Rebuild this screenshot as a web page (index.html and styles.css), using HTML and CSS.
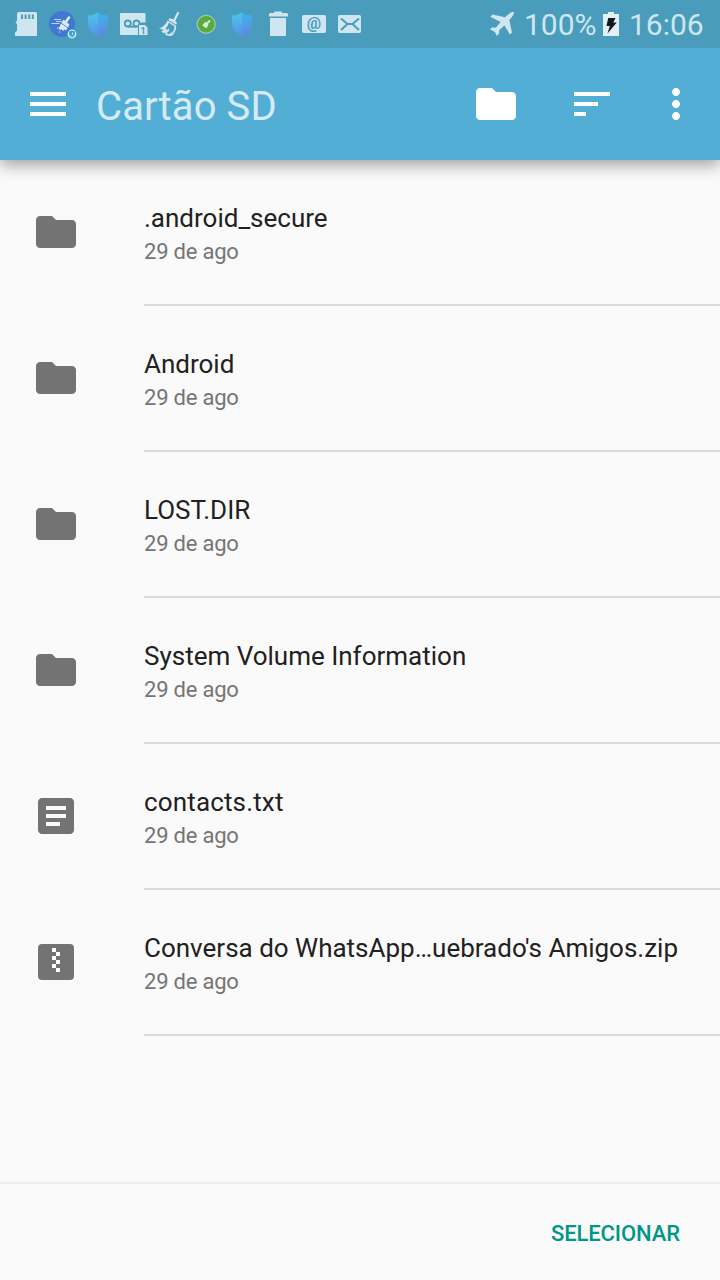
FILE: index.html
```html
<!DOCTYPE html>
<html lang="pt-BR">
<head>
<meta charset="utf-8">
<title>Cartão SD</title>
<link rel="stylesheet" href="styles.css">
</head>
<body>
<svg class="defs" aria-hidden="true">
  <defs>
    <linearGradient id="shield-fill" x1="0" y1="0" x2=".35" y2="1"><stop offset="0" stop-color="#32b6e5"/><stop offset=".5" stop-color="#45a9e7"/><stop offset="1" stop-color="#6189ed"/></linearGradient>
    <linearGradient id="shield-light" x1="0" y1="0" x2="0" y2="1"><stop offset="0" stop-color="#55d0e7"/><stop offset="1" stop-color="#5790ea"/></linearGradient>
    <symbol id="folder" viewBox="0 0 24 24"><path d="M10 4H4c-1.100 0-1.990.9-1.990 2L2 18c0 1.100.9 2 2 2h16c1.100 0 2-.9 2-2V8c0-1.100-.9-2-2-2h-8l-2-2z"/></symbol>
    <symbol id="shield" viewBox="0 0 36 48"><path fill="url(#shield-fill)" d="M18 12Q22 15.500 28 15.500V24Q28 31 18 36Q8 31 8 24V15.500Q14 15.500 18 12Z"/><path fill="url(#shield-light)" opacity=".65" d="M18 12Q14 15.500 8 15.500V24Q8 31 18 36Z"/></symbol>
  </defs>
</svg>
<div class="screen">
  <header class="status">
    <div class="notifications">
      <svg class="note" viewBox="8 0 36 48"><path fill="#cfe6ef" fill-rule="evenodd" d="M19 12h16.500q1.500 0 1.500 1.500V36H15v-3.500l2-2V24l-1.500-1 1.500-2.500V14q0-2 2-2ZM21 14.500v4.500h2v-4.500zM24.600 14.500v4.500h2v-4.500zM28.200 14.500v4.500h2v-4.500zM31.800 14.500v4.500h2v-4.500z"/></svg>
      <svg class="note" viewBox="44 0 36 48"><circle cx="62" cy="24" r="13" fill="#3f79d1"/><path d="M69 17.500l-2.500 3.500" stroke="#e6f0fa" stroke-width="2.600" stroke-linecap="round"/><path d="M63.500 19.500l6 5-1.500 3-6.500-4.500zM61 23.500l6.500 4.500-1.500 2.500-2-1-.5 1.500-2-1.500-2 .5-.5-2z" fill="#dceafa"/><path d="M54 19.500h7M51.500 23.500h8M56 21.500h6M57 28.500l2-1" stroke="#b9d5f3" stroke-width="1"/><circle cx="59.500" cy="32" r=".8" fill="#a9c8ee"/><circle cx="72" cy="34" r="4.400" fill="#e4f0f6"/><path d="M72 30.500l3 1v2.500q0 2-3 3.500-3-1.500-3-3.500v-2.500z" fill="#29a4dd"/><path d="M72.500 32.500v2l-1 1" stroke="#e8f5fb" stroke-width=".9" fill="none"/></svg>
      <svg class="note"><use href="#shield"/></svg>
      <svg class="note" viewBox="116 0 36 48"><path fill="#cfe6ef" d="M121 13h23.500q1 0 1 1v8.500H139V35h-18q-1 0-1-1V14q0-1 1-1Z"/><g fill="none" stroke="#4a9cbd" stroke-width="1.800"><circle cx="127.800" cy="23.500" r="3"/><circle cx="136.500" cy="23.500" r="3"/><path d="M128 26.700h8.500"/></g><path fill="#cfe6ef" stroke="#4a9cbd" stroke-width="1" d="M138.500 24.500h6.500l3 3V35.500h-9.500z"/><text class="sim" x="140.600" y="33.800">1</text></svg>
      <svg class="note" viewBox="152 0 36 48"><path d="M178 13l-3.700 7.200" stroke="#cfe6ef" stroke-width="2.200" stroke-linecap="round"/><path d="M169 18.500q2-.5 4.800 1.200t3.200 3.800l-1.200 1-7.500-4.500z" fill="#cfe6ef"/><path fill="#cfe6ef" fill-rule="evenodd" d="M167.500 20.500l8.800 5.200q-.2 6-4.300 10-4.500.8-7.500-1.700l1.800-1.300-3.200.2-2-2 3-.9-5-1.600Q165 26.500 167.500 20.500ZM168.700 22.700q-1 4-3.200 6.300l1.800.7 2-1.500-.6 3.300-2.400 1.700 3.300 1 2.400-3-.4 3q3-3.800 2.900-8z"/></svg>
      <svg class="note" viewBox="188 0 36 48"><circle cx="206.200" cy="24.300" r="9" fill="#58ac3e" stroke="#a5c9ac" stroke-width="1.200"/><path d="M209.500 21l-2.500 2.500" stroke="#d9ecd4" stroke-width="1.800" stroke-linecap="round"/><path d="M205.500 21.800l3 3-2.300 3.700-4-3.200z" fill="#d9ecd4"/></svg>
      <svg class="note"><use href="#shield"/></svg>
      <svg class="note" viewBox="260 0 36 48"><path fill="#cfe6ef" d="M270 13h4v-.500q0-1 1-1h6q1 0 1 1v.500h4.500q1.500 0 1.500 1.500V16.500h-19V14.500q0-1.500 1-1.500ZM270 18h16v17q0 1-1 1h-14q-1 0-1-1z"/></svg>
      <svg class="note" viewBox="296 0 36 48"><rect x="302" y="15" width="24" height="18" rx="2" fill="#cfe6ef"/><text class="at" x="314" y="28.500">@</text></svg>
      <svg class="note" viewBox="332 0 36 48"><rect x="338" y="15" width="23" height="18" rx="2" fill="#cfe6ef"/><path d="M341 18.500l6.500 5.500h5l6.500-5.500M341 30l6.500-6M359 30l-6.500-6" fill="none" stroke="#4a9cbd" stroke-width="2"/></svg>
    </div>
    <div class="system">
      <svg class="plane" viewBox="490 12 24 24"><path fill="#cfe6ef" d="M508.500 14.200Q511.500 11.500 514 12Q514.200 14.500 511.500 17.500L509.300 20 512 32.500 509.800 34.600 504.500 25.600 499.300 30 499.100 33.300 496.900 36 494.900 32 490 29.300 492 27.400 496 27.500 500.600 21.900 490.300 16.800 492.500 14.500 505 17.300Z"/></svg>
      <span class="percent">100%</span>
      <svg class="battery" viewBox="0 0 16 24"><path fill="#e2f0f6" d="M5 0h6v2h5v22H0V2h5z"/><path fill="#10191d" d="M5.200 6h7.300L10.300 10.500h3.500L4.500 21.500 6.800 14H3.500z"/></svg>
      <span class="clock">16:06</span>
    </div>
  </header>
  <nav class="appbar">
    <svg class="action menu" viewBox="0 0 24 24"><path d="M3 18h18v-2H3v2zm0-5h18v-2H3v2zm0-7v2h18V6H3z"/></svg>
    <h1 class="heading">Cartão SD</h1>
    <svg class="action"><use href="#folder"/></svg>
    <svg class="action sort" viewBox="0 0 24 24"><path d="M3 18h6v-2H3v2zM3 6v2h18V6H3zm0 7h12v-2H3v2z"/></svg>
    <svg class="action more" viewBox="0 0 24 24"><path d="M12 8c1.100 0 2-.9 2-2s-.9-2-2-2-2 .9-2 2 .9 2 2 2zm0 2c-1.100 0-2 .9-2 2s.9 2 2 2 2-.9 2-2-.9-2-2-2zm0 6c-1.100 0-2 .9-2 2s.9 2 2 2 2-.9 2-2-.9-2-2-2z"/></svg>
  </nav>
  <main class="files">
    <div class="file"><svg class="kind"><use href="#folder"/></svg><div class="info"><div class="name">.android_secure</div><div class="date">29 de ago</div></div></div>
    <div class="file"><svg class="kind"><use href="#folder"/></svg><div class="info"><div class="name">Android</div><div class="date">29 de ago</div></div></div>
    <div class="file"><svg class="kind"><use href="#folder"/></svg><div class="info"><div class="name">LOST.DIR</div><div class="date">29 de ago</div></div></div>
    <div class="file"><svg class="kind"><use href="#folder"/></svg><div class="info"><div class="name">System Volume Information</div><div class="date">29 de ago</div></div></div>
    <div class="file"><svg class="kind" viewBox="0 0 24 24"><path d="M19 3H5c-1.100 0-2 .9-2 2v14c0 1.100.9 2 2 2h14c1.100 0 2-.9 2-2V5c0-1.100-.9-2-2-2zm-5 14H7v-2h7v2zm3-4H7v-2h10v2zm0-4H7V7h10v2z"/></svg><div class="info"><div class="name loose">contacts.txt</div><div class="date">29 de ago</div></div></div>
    <div class="file"><svg class="kind" viewBox="0 0 24 24"><rect x="3" y="3" width="18" height="18" rx="2"/><path fill="#fafafa" d="M10 5h2v2h-2zM12 7h2v2h-2zM10 9h2v2h-2zM12 11h2v2h-2zM10 13h2v2h-2zM12 15h2v2h-2z"/></svg><div class="info"><div class="name">Conversa do WhatsApp…uebrado's Amigos.zip</div><div class="date">29 de ago</div></div></div>
  </main>
  <footer class="footer"><button class="select">SELECIONAR</button></footer>
</div>
</body>
</html>
```
FILE: styles.css
```css
* { box-sizing: border-box; }
body { margin: 0; background: #fafafa; font-family: Roboto, "Noto Sans", sans-serif; }
svg { display: block; flex: none; }
.defs { position: absolute; width: 0; height: 0; }
.screen { display: flex; flex-direction: column; width: 720px; height: 1280px; overflow: hidden; }

.status { position: relative; z-index: 1; display: flex; justify-content: space-between; flex: none; height: 48px; padding: 0 16px 0 8px; background: #4a9cbd; color: #cfe6ef; }
.notifications { display: flex; }
.note { width: 36px; height: 48px; }
.sim { font: 700 9px Roboto, sans-serif; fill: #4a9cbd; }
.at { font: 700 16px Roboto, sans-serif; fill: #4a9cbd; text-anchor: middle; }
.system { display: flex; align-items: center; font-size: 30px; line-height: 46px; white-space: nowrap; }
.plane { width: 24px; height: 24px; margin-right: 10px; }
.percent { width: 73px; padding-top: 2px; }
.battery { width: 16px; height: 24px; margin: 0 10px 0 6px; }
.clock { width: 75px; padding-top: 2px; }

.appbar { display: flex; align-items: center; flex: none; height: 112px; padding: 0 20px 0 24px; background: #53aed5; fill: #fff; box-shadow: 0 4px 16px rgba(0, 0, 0, .4); }
.action { width: 48px; height: 48px; }
.heading { flex: 1; margin: 5px 0 0 24px; font-size: 40px; font-weight: 400; line-height: 48px; letter-spacing: .1px; color: #d4ebf5; }
.sort { margin-left: 48px; }
.more { margin-left: 36px; }

.files { flex: 1; }
.file { display: flex; height: 146px; padding-left: 32px; }
.kind { width: 48px; height: 48px; margin: 48px 64px 0 0; fill: #737373; }
.info { flex: 1; padding-top: 43px; border-bottom: 2px solid #dcdcdc; white-space: nowrap; }
.name { font-size: 26px; line-height: 30px; color: #212121; }
.loose { letter-spacing: .15px; }
.date { margin-top: 6px; font-size: 22px; line-height: 26px; letter-spacing: -.22px; color: #757575; }

.footer { display: flex; justify-content: flex-end; align-items: center; flex: none; height: 96px; padding: 4px 40px 0 0; background: #fafafa; box-shadow: 0 0 4px rgba(0, 0, 0, .16); }
.select { padding: 0; border: 0; background: none; font: 500 22px/26px Roboto, sans-serif; letter-spacing: -.1px; color: #009688; }
```
